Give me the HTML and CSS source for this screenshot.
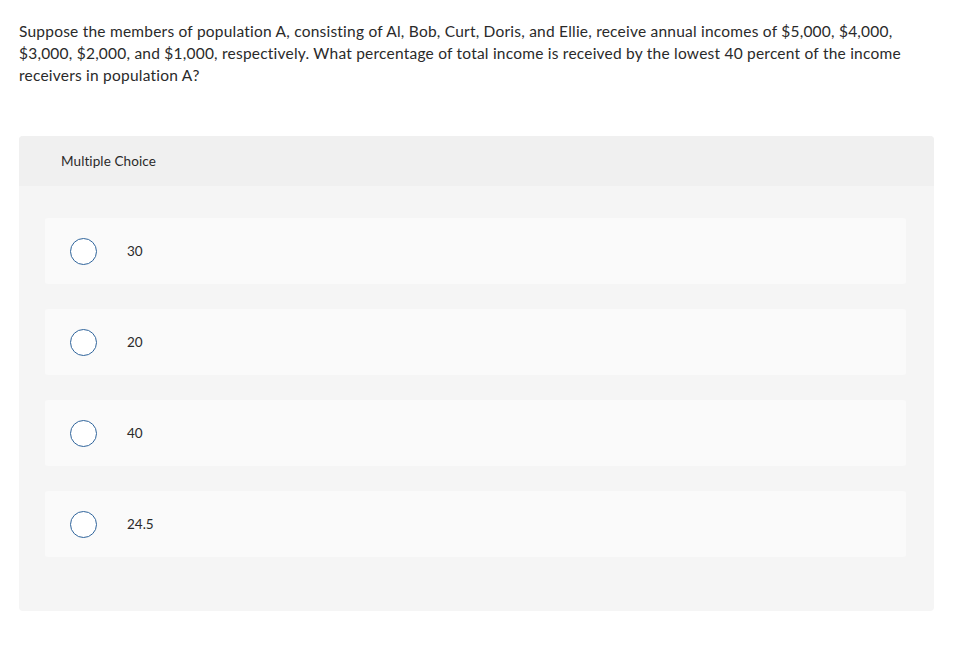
FILE: index.html
```html
<!DOCTYPE html>
<html lang="en">
<head>
<meta charset="utf-8">
<title>Multiple Choice</title>
<link rel="stylesheet" href="styles.css">
</head>
<body>
<main class="page">
  <p class="question">Suppose the members of population A, consisting of Al, Bob, Curt, Doris, and Ellie, receive annual incomes of $5,000, $4,000, $3,000, $2,000, and $1,000, respectively. What percentage of total income is received by the lowest 40 percent of the income receivers in population A?</p>
  <section class="panel">
    <header class="panel-head">Multiple Choice</header>
    <div class="options">
      <label class="option"><span class="radio"></span><span class="opt-text">30</span></label>
      <label class="option"><span class="radio"></span><span class="opt-text">20</span></label>
      <label class="option"><span class="radio"></span><span class="opt-text">40</span></label>
      <label class="option"><span class="radio"></span><span class="opt-text">24.5</span></label>
    </div>
  </section>
</main>
</body>
</html>
```
FILE: styles.css
```css
html, body {
  margin: 0;
  padding: 0;
  background: #ffffff;
}
body {
  font-family: Lato, "Open Sans", Arial, sans-serif;
  color: #2a2a2a;
}
.page {
  padding: 20px 28px 0 19px;
}
.question {
  margin: 0;
  font-size: 15.5px;
  letter-spacing: 0.22px;
  line-height: 22px;
  color: #2a2a2a;
  max-width: 900px;
}
.panel {
  margin-top: 50px;
  width: 915px;
  background: #f5f5f5;
  border-radius: 4px;
  overflow: hidden;
  padding-bottom: 54px;
}
.panel-head {
  height: 50px;
  box-sizing: border-box;
  padding-left: 42px;
  display: flex;
  align-items: center;
  background: #f0f0f0;
  font-size: 13.5px;
  letter-spacing: 0.1px;
  color: #2a2a2a;
}
.options {
  display: flex;
  flex-direction: column;
  gap: 25px;
  padding: 32px 28px 0 26px;
}
.option {
  height: 66px;
  background: #fafafa;
  border-radius: 3px;
  display: flex;
  align-items: center;
  padding-left: 25px;
}
.radio {
  width: 25px;
  height: 25px;
  border: 1.5px solid #2f649b;
  border-radius: 50%;
  background: #ffffff;
  flex: none;
}
.opt-text {
  margin-left: 30px;
  font-size: 13.5px;
  color: #2a2a2a;
}
```
